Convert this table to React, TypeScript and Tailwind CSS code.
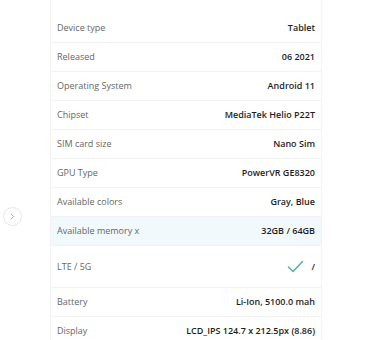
import React from 'react';
import { ChevronRight } from 'lucide-react';

type Spec = { label: string; value: React.ReactNode; highlight?: boolean; tall?: boolean };

const specs: Spec[] = [
  { label: 'Device type', value: 'Tablet' },
  { label: 'Released', value: '06 2021' },
  { label: 'Operating System', value: 'Android 11' },
  { label: 'Chipset', value: 'MediaTek Helio P22T' },
  { label: 'SIM card size', value: 'Nano Sim' },
  { label: 'GPU Type', value: 'PowerVR GE8320' },
  { label: 'Available colors', value: 'Gray, Blue' },
  { label: 'Available memory x', value: '32GB / 64GB', highlight: true },
  {
    label: 'LTE / 5G',
    tall: true,
    value: (
      <span className="flex items-center gap-[7px]">
        <svg width="17" height="13" viewBox="0 0 17 13" fill="none">
          <path d="M1.5 7l4.5 4.5L15.5 1.5" stroke="#55b3a4" strokeWidth="1.6" strokeLinecap="round" strokeLinejoin="round" />
        </svg>
        <span>/</span>
      </span>
    ),
  },
  { label: 'Battery', value: 'Li-Ion, 5100.0 mah' },
  { label: 'Display', value: 'LCD_IPS 124.7 x 212.5px (8.86)' },
];

export default function App() {
  return (
    <div className="relative h-[340px] w-[370px] overflow-hidden bg-white" style={{ fontFamily: '"Open Sans", sans-serif' }}>
      <button className="absolute left-[3px] top-[207px] flex h-[19px] w-[19px] items-center justify-center rounded-full border border-[#e6e6e6] bg-white text-[#888]">
        <ChevronRight size={9} strokeWidth={2} />
      </button>
      <div className="ml-[50px] w-[272px] border-x border-[#f2f2f2] pt-[14px]">
        {specs.map((s) => (
          <div
            key={s.label}
            className={`flex items-center justify-between border-b border-[#f2f2f2] px-[6px] text-[9px] ${
              s.tall ? 'h-[42px]' : 'h-[29px]'
            } ${s.highlight ? 'bg-[#f2f9fd]' : ''}`}
          >
            <span className="text-[#666]">{s.label}</span>
            <span className="font-semibold text-[#1e1e1e]">{s.value}</span>
          </div>
        ))}
      </div>
    </div>
  );
}
